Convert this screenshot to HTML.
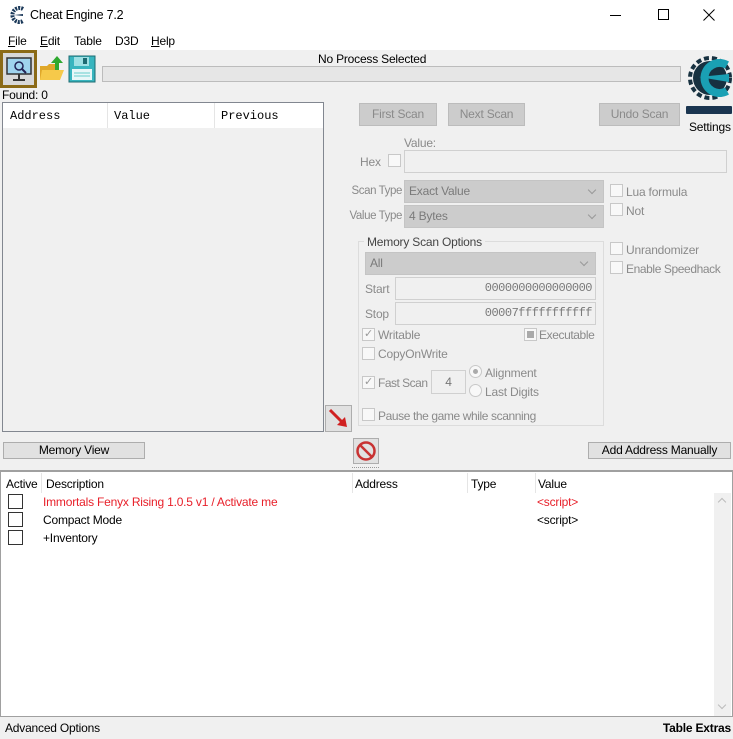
<!DOCTYPE html>
<html><head><meta charset="utf-8"><style>
*{box-sizing:border-box;margin:0;padding:0}
body{width:733px;height:739px;background:#f0f0f0;font-family:"Liberation Sans",sans-serif;font-size:12px;letter-spacing:-0.2px;color:#000;position:relative;overflow:hidden}
.a{position:absolute;white-space:nowrap}
.r{position:absolute;white-space:nowrap;text-align:right}
.btn{position:absolute;background:#cccccc;border:1px solid #bcbcbc;color:#8a8a8a;text-align:center;font-size:12px}
.btn2{position:absolute;background:#e1e1e1;border:1px solid #adadad;color:#000;text-align:center;font-size:12px}
.inp{position:absolute;background:#f0f0f0;border:1px solid #d0d0d0}
.sel{position:absolute;background:#cccccc;border:1px solid #c4c4c4;color:#7a7a7a;padding-left:4px;font-size:12px}
.sel:after{content:"";position:absolute;right:8px;top:6px;width:5px;height:5px;border-right:1px solid #999;border-bottom:1px solid #999;transform:rotate(45deg)}
.cb{position:absolute;width:13px;height:13px;border:1px solid #c8c8c8;background:#f8f8f8}
.g{color:#8a8a8a}
.bcb{position:absolute;width:15px;height:15px;border:1px solid #333;background:#fff}
</style></head><body>
<div class="a" style="left:0;top:0;width:733px;height:50px;background:#fff"></div>
<svg class="a" style="left:8px;top:5px" width="18" height="20" viewBox="0 0 18 20"><path d="M15 4 A7 7 0 1 0 15 16" fill="none" stroke="#1c3a5a" stroke-width="4" stroke-dasharray="2 1"/><path d="M6 10 L15 9 L15 11Z" fill="#1c3a5a"/></svg>
<div class="a" style="left:30px;top:8px;font-size:12.5px">Cheat Engine 7.2</div>
<div class="a" style="left:610px;top:15px;width:11px;height:1px;background:#000"></div>
<div class="a" style="left:658px;top:9px;width:11px;height:11px;border:1px solid #000"></div>
<svg class="a" style="left:703px;top:9px" width="12" height="12" viewBox="0 0 12 12"><path d="M0.5 0.5 L11.5 11.5 M11.5 0.5 L0.5 11.5" stroke="#000" stroke-width="1"/></svg>
<div class="a" style="left:8px;top:34px"><u>F</u>ile</div>
<div class="a" style="left:40px;top:34px"><u>E</u>dit</div>
<div class="a" style="left:74px;top:34px">Table</div>
<div class="a" style="left:115px;top:34px">D3D</div>
<div class="a" style="left:151px;top:34px"><u>H</u>elp</div>
<!-- toolbar -->
<div class="a" style="left:0;top:50px;width:37px;height:38px;background:#8b6a16"></div>
<div class="a" style="left:3px;top:53px;width:31px;height:32px;background:#d8d8d8"></div>
<svg class="a" style="left:5px;top:55px" width="28" height="28" viewBox="0 0 28 28"><rect x="2" y="3" width="24" height="16" fill="#9fd3ee" stroke="#333" stroke-width="1.5"/><circle cx="14" cy="11" r="4" fill="none" stroke="#225" stroke-width="1.5"/><path d="M17 14 L21 18" stroke="#225" stroke-width="2"/><path d="M14 19 V24 M8 25 H20" stroke="#333" stroke-width="2"/></svg>
<svg class="a" style="left:39px;top:54px" width="26" height="30" viewBox="0 0 26 30"><path d="M1 12 H8 L10 10 H18 V26 H1Z" fill="#e0a82a"/><path d="M3 16 H25 L21 26 H1Z" fill="#f6c94a"/><path d="M18 2 L24 9 H20 V16 H16 V9 H12Z" fill="#2ea82e"/></svg>
<svg class="a" style="left:68px;top:55px" width="28" height="28" viewBox="0 0 28 28"><rect x="1" y="1" width="26" height="26" fill="#38b5bf" stroke="#1d6b72"/><rect x="6" y="2" width="15" height="9" fill="#9ee0e4"/><rect x="15" y="3" width="4" height="6" fill="#1d6b72"/><rect x="4" y="14" width="20" height="11" fill="#e8f7f8"/><path d="M6 18H22M6 21H22" stroke="#6cc"/></svg>
<div class="a" style="left:318px;top:52px">No Process Selected</div>
<div class="a" style="left:102px;top:66px;width:579px;height:16px;background:#e6e6e6;border:1px solid #bcbcbc"></div>
<svg class="a" style="left:685px;top:50px" width="48" height="70" viewBox="0 0 48 70">
<circle cx="25" cy="28" r="20" fill="none" stroke="#173140" stroke-width="4" stroke-dasharray="5 3"/>
<circle cx="25" cy="28" r="17" fill="#173140"/>
<path d="M42 15 A15 15 0 1 0 42 41" fill="none" stroke="#1aa0b4" stroke-width="8"/>
<path d="M14 27 L44 24 L44 32 Z" fill="#1aa0b4"/>
<rect x="1" y="56" width="46" height="8" rx="1" fill="#1a3550"/></svg>
<div class="a" style="left:689px;top:120px">Settings</div>
<div class="a" style="left:2px;top:88px">Found: 0</div>
<!-- left list -->
<div class="a" style="left:2px;top:102px;width:322px;height:330px;background:#f0f0f0;border:1px solid #828790"></div>
<div class="a" style="left:3px;top:103px;width:320px;height:25px;background:#fff"></div>
<div class="a" style="left:107px;top:103px;width:1px;height:25px;background:#e5e5e5"></div>
<div class="a" style="left:214px;top:103px;width:1px;height:25px;background:#e5e5e5"></div>
<div class="a" style="left:10px;top:109px;font-family:'Liberation Mono',monospace;font-size:12px;letter-spacing:0">Address</div>
<div class="a" style="left:114px;top:109px;font-family:'Liberation Mono',monospace;font-size:12px;letter-spacing:0">Value</div>
<div class="a" style="left:221px;top:109px;font-family:'Liberation Mono',monospace;font-size:12px;letter-spacing:0">Previous</div>
<!-- buttons -->
<div class="btn" style="left:359px;top:103px;width:78px;height:23px;line-height:21px">First Scan</div>
<div class="btn" style="left:448px;top:103px;width:77px;height:23px;line-height:21px">Next Scan</div>
<div class="btn" style="left:599px;top:103px;width:81px;height:23px;line-height:21px">Undo Scan</div>
<div class="a g" style="left:404px;top:136px">Value:</div>
<div class="a g" style="left:360px;top:155px">Hex</div>
<div class="cb" style="left:388px;top:154px"></div>
<div class="inp" style="left:404px;top:150px;width:323px;height:23px"></div>
<div class="r g" style="left:300px;width:102px;top:185px;font-size:11.5px;letter-spacing:-0.4px">Scan Type</div>
<div class="sel" style="left:404px;top:180px;width:200px;height:23px;line-height:21px">Exact Value</div>
<div class="r g" style="left:300px;width:102px;top:210px;font-size:11.5px;letter-spacing:-0.4px">Value Type</div>
<div class="sel" style="left:404px;top:205px;width:200px;height:23px;line-height:21px">4 Bytes</div>
<div class="cb" style="left:610px;top:184px"></div><div class="a g" style="left:626px;top:185px">Lua formula</div>
<div class="cb" style="left:610px;top:203px"></div><div class="a g" style="left:626px;top:204px">Not</div>
<div class="cb" style="left:610px;top:242px"></div><div class="a g" style="left:626px;top:243px">Unrandomizer</div>
<div class="cb" style="left:610px;top:261px"></div><div class="a g" style="left:626px;top:262px;letter-spacing:-0.4px">Enable Speedhack</div>
<!-- group -->
<div class="a" style="left:358px;top:241px;width:246px;height:185px;border:1px solid #dcdcdc"></div>
<div class="a" style="left:364px;top:235px;background:#f0f0f0;padding:0 3px;color:#444">Memory Scan Options</div>
<div class="sel" style="left:365px;top:252px;width:231px;height:23px;line-height:21px">All</div>
<div class="a g" style="left:365px;top:282px">Start</div>
<div class="inp" style="left:395px;top:277px;width:201px;height:23px;text-align:right;padding-right:3px;line-height:21px;color:#7a7a7a;font-family:'Liberation Mono',monospace;letter-spacing:-0.5px">0000000000000000</div>
<div class="a g" style="left:365px;top:307px">Stop</div>
<div class="inp" style="left:395px;top:302px;width:201px;height:23px;text-align:right;padding-right:3px;line-height:21px;color:#7a7a7a;font-family:'Liberation Mono',monospace;letter-spacing:-0.5px">00007fffffffffff</div>
<div class="cb" style="left:362px;top:328px;color:#999;font-size:11px;line-height:11px;text-align:center">✓</div><div class="a g" style="left:378px;top:328px">Writable</div>
<div class="cb" style="left:524px;top:328px"><div style="margin:2px;width:7px;height:7px;background:#aaa"></div></div><div class="a g" style="left:539px;top:328px;letter-spacing:-0.4px">Executable</div>
<div class="cb" style="left:362px;top:347px"></div><div class="a g" style="left:378px;top:347px">CopyOnWrite</div>
<div class="cb" style="left:362px;top:376px;color:#999;font-size:11px;line-height:11px;text-align:center">✓</div><div class="a g" style="left:378px;top:376px;letter-spacing:-0.5px">Fast Scan</div>
<div class="inp" style="left:431px;top:370px;width:35px;height:24px;text-align:center;line-height:22px;color:#777">4</div>
<div class="a" style="left:469px;top:365px;width:13px;height:13px;border-radius:50%;border:1px solid #c8c8c8;background:#f8f8f8"><div style="margin:3px;width:5px;height:5px;border-radius:50%;background:#aaa"></div></div><div class="a g" style="left:485px;top:366px">Alignment</div>
<div class="a" style="left:469px;top:384px;width:13px;height:13px;border-radius:50%;border:1px solid #c8c8c8;background:#f8f8f8"></div><div class="a g" style="left:485px;top:385px">Last Digits</div>
<div class="cb" style="left:362px;top:408px"></div><div class="a g" style="left:378px;top:409px;letter-spacing:-0.4px">Pause the game while scanning</div>
<div class="btn2" style="left:325px;top:405px;width:27px;height:27px"><svg width="25" height="25" viewBox="0 0 25 25"><path d="M4 4 L18 18" stroke="#d02020" stroke-width="3"/><path d="M21 21 L11 19 L19 11Z" fill="#d02020"/></svg></div>
<div class="btn2" style="left:3px;top:442px;width:142px;height:17px;line-height:15px">Memory View</div>
<div class="btn2" style="left:353px;top:438px;width:26px;height:26px"><svg width="24" height="24" viewBox="0 0 24 24"><circle cx="12" cy="12" r="8.5" fill="none" stroke="#c83232" stroke-width="2.5"/><path d="M6 6 L18 18" stroke="#c83232" stroke-width="2.5"/></svg></div>
<div class="btn2" style="left:588px;top:442px;width:143px;height:17px;line-height:15px">Add Address Manually</div>
<div class="a" style="left:0;top:470px;width:733px;height:1px;background:#a0a0a0"></div>
<div class="a" style="left:352px;top:467px;width:27px;height:0;border-top:1px dotted #999"></div>
<!-- lower list -->
<div class="a" style="left:0;top:471px;width:733px;height:246px;background:#fff;border:1px solid #a0a0a0"></div>
<div class="a" style="left:6px;top:477px">Active</div>
<div class="a" style="left:41px;top:473px;width:1px;height:20px;background:#e5e5e5"></div>
<div class="a" style="left:46px;top:477px">Description</div>
<div class="a" style="left:352px;top:473px;width:1px;height:20px;background:#e5e5e5"></div>
<div class="a" style="left:355px;top:477px">Address</div>
<div class="a" style="left:467px;top:473px;width:1px;height:20px;background:#e5e5e5"></div>
<div class="a" style="left:471px;top:477px">Type</div>
<div class="a" style="left:535px;top:473px;width:1px;height:20px;background:#e5e5e5"></div>
<div class="a" style="left:538px;top:477px">Value</div>
<div class="bcb" style="left:8px;top:494px"></div><div class="a" style="left:43px;top:495px;color:#e8202a">Immortals Fenyx Rising 1.0.5 v1 / Activate me</div><div class="a" style="left:537px;top:495px;color:#e8202a">&lt;script&gt;</div>
<div class="bcb" style="left:8px;top:512px"></div><div class="a" style="left:43px;top:513px">Compact Mode</div><div class="a" style="left:537px;top:513px">&lt;script&gt;</div>
<div class="bcb" style="left:8px;top:530px"></div><div class="a" style="left:43px;top:531px">+Inventory</div>
<div class="a" style="left:714px;top:493px;width:17px;height:223px;background:#f0f0f0"></div>
<div class="a" style="left:719px;top:499px;width:6px;height:6px;border-left:1px solid #bbb;border-top:1px solid #bbb;transform:rotate(45deg)"></div>
<div class="a" style="left:719px;top:702px;width:6px;height:6px;border-right:1px solid #bbb;border-bottom:1px solid #bbb;transform:rotate(45deg)"></div>
<div class="a" style="left:5px;top:721px">Advanced Options</div>
<div class="r" style="right:2px;top:721px;font-weight:bold">Table Extras</div>
</body></html>
